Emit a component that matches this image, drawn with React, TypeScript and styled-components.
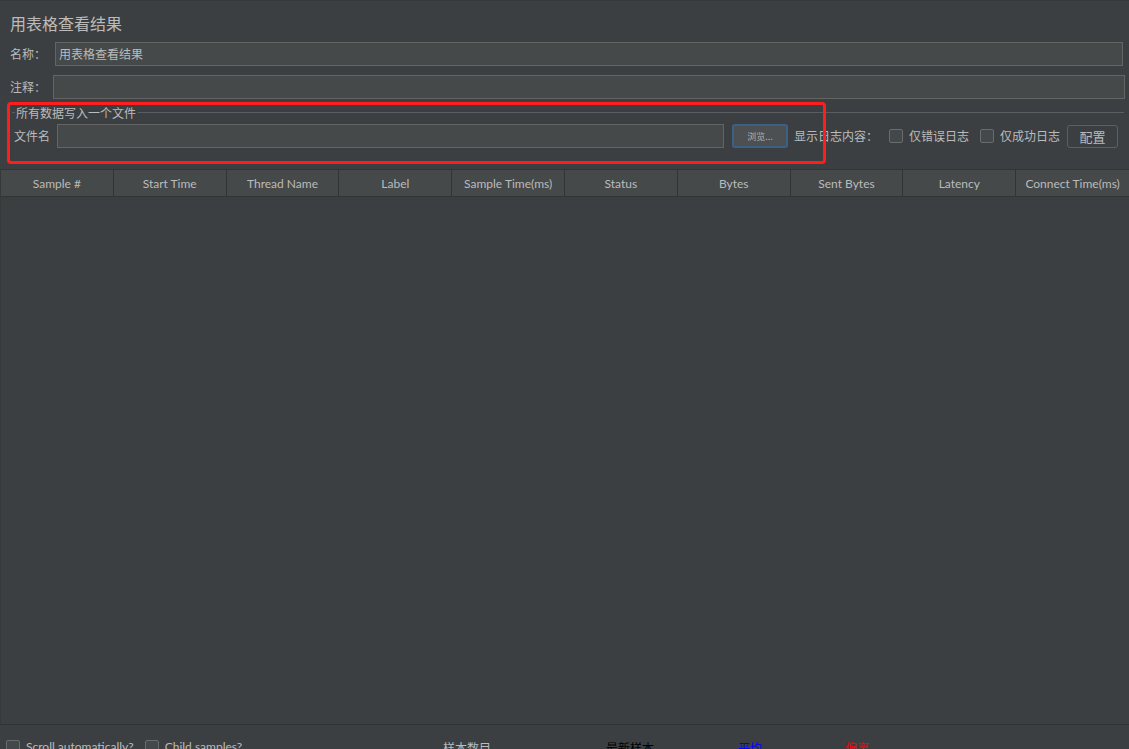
import React from "react";
import styled, { createGlobalStyle } from "styled-components";

const GlobalStyle = createGlobalStyle`
  html, body { margin: 0; padding: 0; background: #3c3f41; }
  body { font-family: "Noto Sans CJK SC", "Noto Sans", sans-serif; }
`;

const CJK = `"Noto Sans CJK SC", "Noto Sans", sans-serif`;
const LATIN = `Lato, "Noto Sans CJK SC", sans-serif`;

const Page = styled.div`
  position: relative;
  width: 1129px;
  height: 749px;
  overflow: hidden;
  background: #3c3f41;
  color: #bbbbbb;
  display: flex;
  flex-direction: column;
  font-family: ${CJK};
  font-size: 12px;
  border-top: 1px solid #353739;
  box-sizing: border-box;
`;

const Title = styled.div`
  font-size: 16px;
  line-height: 18px;
  padding: 13px 10px 0;
  height: 28px;
  flex: none;
`;

const FieldRow = styled.div<{ $left: number; $right: number; $top: number }>`
  display: flex;
  align-items: center;
  height: 24px;
  flex: none;
  margin-top: ${(p) => p.$top}px;
  padding-left: ${(p) => p.$left}px;
  padding-right: ${(p) => p.$right}px;
`;

const Label = styled.span<{ $width: number }>`
  width: ${(p) => p.$width}px;
  flex: none;
  line-height: 14px;
  white-space: nowrap;
`;

const TextInput = styled.div`
  flex: 1;
  height: 24px;
  box-sizing: border-box;
  border: 1px solid #646464;
  background: #45494a;
  padding: 0 3px;
  display: flex;
  align-items: center;
  line-height: 14px;
`;

const GroupHeader = styled.div`
  display: flex;
  align-items: center;
  height: 13px;
  flex: none;
  margin-top: 7px;
  padding: 0 5px 0 12px;
  &::before {
    content: "";
    width: 3px;
    height: 1px;
    background: #5b5e60;
    margin-right: 1px;
  }
  &::after {
    content: "";
    flex: 1;
    height: 1px;
    background: #5b5e60;
    margin-left: 2px;
  }
`;

const GroupTitle = styled.span`
  line-height: 13px;
`;

const Inline = styled.span<{ $ml: number }>`
  margin-left: ${(p) => p.$ml}px;
  flex: none;
  white-space: nowrap;
  line-height: 14px;
`;

const BrowseButton = styled.div`
  margin-left: 8px;
  width: 56px;
  height: 24px;
  box-sizing: border-box;
  border: 2px solid #3d6185;
  border-radius: 3px;
  background: #4c5052;
  display: flex;
  align-items: center;
  justify-content: center;
  font-size: 9px;
  color: #b0b0b0;
  flex: none;
`;

const Box = styled.span<{ $ml: number }>`
  margin-left: ${(p) => p.$ml}px;
  width: 14px;
  height: 14px;
  box-sizing: border-box;
  border: 1px solid #6b6b6b;
  border-radius: 2px;
  background: #43494a;
  flex: none;
`;

const PlainButton = styled.div`
  margin-left: 7px;
  width: 51px;
  height: 23px;
  box-sizing: border-box;
  border: 1px solid #5e6060;
  border-radius: 3px;
  background: #3c3f41;
  display: flex;
  align-items: center;
  justify-content: center;
  font-size: 13px;
  flex: none;
`;

const Table = styled.div`
  margin-top: 21px;
  flex: 1;
  display: flex;
  flex-direction: column;
  border-top: 1px solid #323436;
  border-bottom: 1px solid #313335;
  border-left: 1px solid #36383a;
`;

const HeaderRow = styled.div`
  display: grid;
  grid-template-columns: repeat(10, 1fr);
  height: 26px;
  flex: none;
  background: #45494a;
  border-bottom: 1px solid #323436;
`;

const HeaderCell = styled.div`
  display: flex;
  align-items: center;
  justify-content: center;
  border-right: 1px solid #323436;
  font-family: ${LATIN};
  font-size: 12px;
  color: #bbbbbb;
  white-space: nowrap;
  overflow: hidden;
  &:last-child { border-right: none; }
`;

const TableBody = styled.div`
  flex: 1;
  background: #3c3f41;
`;

const Footer = styled.div`
  height: 24px;
  box-sizing: border-box;
  flex: none;
  display: flex;
  align-items: flex-start;
  padding-top: 15px;
  padding-left: 6px;
`;

const OptionGroup = styled.div`
  width: 437px;
  flex: none;
  display: flex;
  align-items: flex-start;
`;

const FooterText = styled.span<{ $ml: number }>`
  margin-left: ${(p) => p.$ml}px;
  font-family: ${LATIN};
  font-size: 12px;
  line-height: 16px;
  white-space: nowrap;
  margin-top: -1px;
`;

const StatLabel = styled.span<{ $width: number; $color: string }>`
  width: ${(p) => p.$width}px;
  flex: none;
  color: ${(p) => p.$color};
  font-size: 12px;
  line-height: 16px;
  white-space: nowrap;
  margin-top: 0px;
`;

const Highlight = styled.div`
  position: absolute;
  left: 7px;
  top: 101px;
  width: 819px;
  height: 62px;
  box-sizing: border-box;
  border: 3px solid #ff1e1e;
  border-radius: 4px;
  pointer-events: none;
`;

const columns = [
  "Sample #",
  "Start Time",
  "Thread Name",
  "Label",
  "Sample Time(ms)",
  "Status",
  "Bytes",
  "Sent Bytes",
  "Latency",
  "Connect Time(ms)",
];

const stats = [
  { text: "样本数目", width: 163, color: "#bbbbbb" },
  { text: "最新样本", width: 132, color: "#000000" },
  { text: "平均", width: 107, color: "#0000ff" },
  { text: "偏离", width: 60, color: "#ff0000" },
];

export default function App() {
  return (
    <Page>
      <GlobalStyle />
      <Title>用表格查看结果</Title>
      <FieldRow $left={10} $right={6} $top={0}>
        <Label $width={45}>名称：</Label>
        <TextInput>用表格查看结果</TextInput>
      </FieldRow>
      <FieldRow $left={10} $right={4} $top={9}>
        <Label $width={43}>注释：</Label>
        <TextInput />
      </FieldRow>
      <GroupHeader>
        <GroupTitle>所有数据写入一个文件</GroupTitle>
      </GroupHeader>
      <FieldRow $left={14} $right={11} $top={5}>
        <Label $width={43}>文件名</Label>
        <TextInput />
        <BrowseButton>浏览...</BrowseButton>
        <Inline $ml={6}>显示日志内容：</Inline>
        <Box $ml={11} />
        <Inline $ml={6}>仅错误日志</Inline>
        <Box $ml={11} />
        <Inline $ml={6}>仅成功日志</Inline>
        <PlainButton>配置</PlainButton>
      </FieldRow>
      <Table>
        <HeaderRow>
          {columns.map((c) => (
            <HeaderCell key={c}>{c}</HeaderCell>
          ))}
        </HeaderRow>
        <TableBody />
      </Table>
      <Footer>
        <OptionGroup>
          <Box $ml={0} />
          <FooterText $ml={6}>Scroll automatically?</FooterText>
          <Box $ml={11} />
          <FooterText $ml={6}>Child samples?</FooterText>
        </OptionGroup>
        {stats.map((s) => (
          <StatLabel key={s.text} $width={s.width} $color={s.color}>
            {s.text}
          </StatLabel>
        ))}
      </Footer>
      <Highlight />
    </Page>
  );
}
